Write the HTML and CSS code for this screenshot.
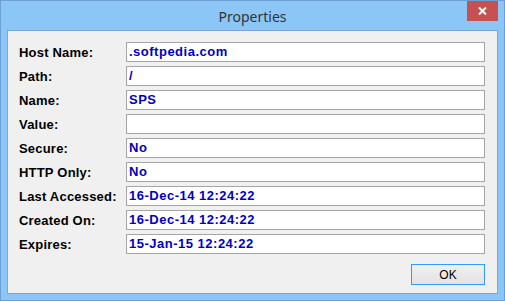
FILE: index.html
```html
<!DOCTYPE html>
<html lang="en">
<head>
    <meta charset="UTF-8">
    <link rel="stylesheet" href="styles.css">
    <title>Properties</title>
</head>
<body>
    <div class="window">
        <div class="titlebar">
            <span class="title">Properties</span>
            <button class="close-btn">
                <svg width="9" height="8" viewBox="0 0 9 8">
                    <path d="M1 0.5 L8 7.5 M8 0.5 L1 7.5" stroke="#ffffff" stroke-width="2"/>
                </svg>
            </button>
        </div>
        <div class="client">
            <div class="fields">
                <div class="row"><label>Host Name:</label><div class="box">.softpedia.com</div></div>
                <div class="row"><label>Path:</label><div class="box">/</div></div>
                <div class="row"><label>Name:</label><div class="box">SPS</div></div>
                <div class="row"><label>Value:</label><div class="box"></div></div>
                <div class="row"><label>Secure:</label><div class="box">No</div></div>
                <div class="row"><label>HTTP Only:</label><div class="box">No</div></div>
                <div class="row"><label>Last Accessed:</label><div class="box">16-Dec-14 12:24:22</div></div>
                <div class="row"><label>Created On:</label><div class="box">16-Dec-14 12:24:22</div></div>
                <div class="row"><label>Expires:</label><div class="box">15-Jan-15 12:24:22</div></div>
            </div>
            <div class="actions">
                <button class="ok-btn">OK</button>
            </div>
        </div>
    </div>
</body>
</html>
```

FILE: styles.css
```css
body {
    margin: 0;
    font-family: 'Liberation Sans', Arial, sans-serif;
}

.window {
    width: 505px;
    height: 301px;
    box-sizing: border-box;
    border: 1px solid #6e9fd3;
    background-color: #8bc6f7;
    display: flex;
    flex-direction: column;
}

.titlebar {
    height: 29px;
    position: relative;
    display: flex;
    justify-content: center;
}

.title {
    font-family: 'Noto Sans', 'Open Sans', sans-serif;
    font-size: 14px;
    color: #333333;
    line-height: 31px;
}

.close-btn {
    position: absolute;
    top: 0;
    right: 6px;
    width: 31px;
    height: 20px;
    border: none;
    padding: 0;
    background-color: #c75050;
    display: flex;
    align-items: center;
    justify-content: center;
}

.client {
    flex: 1;
    margin: 0 6px 6px 6px;
    border: 1px solid #79a8d8;
    background-color: #f0f0f0;
    padding: 11px 12px 0 11px;
}

.fields {
    display: flex;
    flex-direction: column;
    gap: 4px;
}

.row {
    display: flex;
    align-items: center;
    height: 20px;
}

.row label {
    width: 107px;
    font-size: 13px;
    font-weight: bold;
    color: #000000;
    letter-spacing: 0.2px;
}

.box {
    flex: 1;
    height: 20px;
    box-sizing: border-box;
    border: 1px solid #a6a6a6;
    background-color: #ffffff;
    padding-left: 2px;
    font-size: 13px;
    font-weight: bold;
    line-height: 18px;
    color: #0000c0;
    letter-spacing: 0.5px;
}

.actions {
    display: flex;
    justify-content: flex-end;
    margin-top: 10px;
}

.ok-btn {
    width: 74px;
    height: 21px;
    border: 1px solid #3399ff;
    background: linear-gradient(#f0f0f0, #e3e3e3);
    font-family: 'Liberation Sans', Arial, sans-serif;
    font-size: 12px;
    color: #000000;
    padding: 0;
}
```
